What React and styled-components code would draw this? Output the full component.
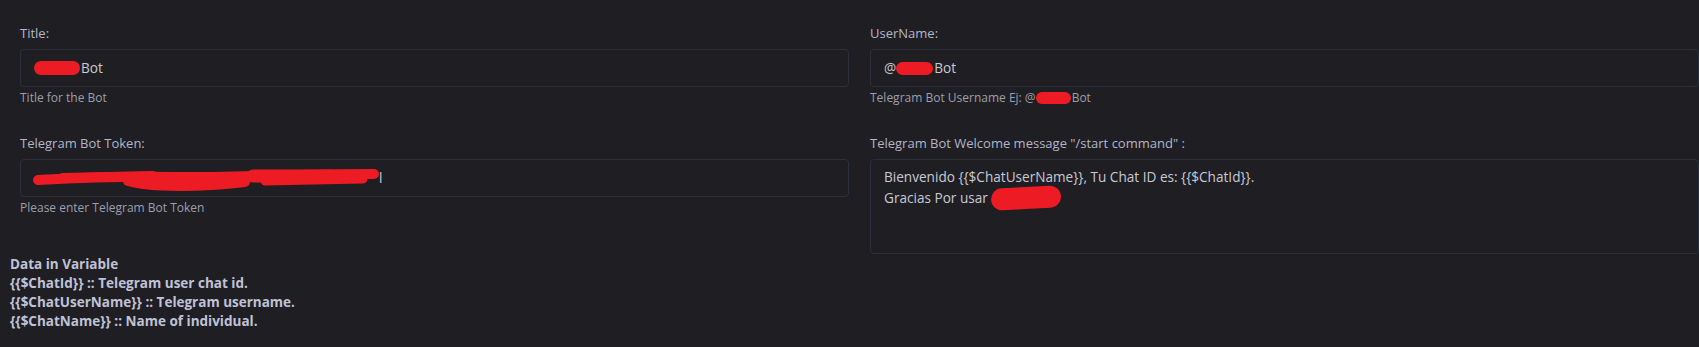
import React from "react";
import styled, { createGlobalStyle } from "styled-components";

const GlobalStyle = createGlobalStyle`
  body {
    margin: 0;
    background: #1e1e23;
    font-family: "Open Sans", "Liberation Sans", sans-serif;
  }
`;

const Page = styled.div`
  width: 1699px;
  height: 347px;
  background: #1e1e23;
  overflow: hidden;
  padding-top: 23px;
  box-sizing: border-box;
`;

const FormGrid = styled.div`
  display: grid;
  grid-template-columns: 829px 829px;
  column-gap: 21px;
  padding-left: 20px;
`;

const Column = styled.div`
  display: flex;
  flex-direction: column;
  gap: 26px;
`;

const Group = styled.div`
  display: flex;
  flex-direction: column;
`;

const Label = styled.label`
  color: #b4b6c8;
  font-size: 13px;
  line-height: 20px;
  margin-bottom: 6px;
`;

const Field = styled.div`
  box-sizing: border-box;
  height: ${(props) => props.height || 38}px;
  border: 1px solid #2b2f3e;
  border-radius: 4px;
  padding: ${(props) => (props.multiline ? "7px 13px" : "0 13px")};
  display: flex;
  align-items: ${(props) => (props.multiline ? "flex-start" : "center")};
  color: #c9cad3;
  font-size: 13.6px;
  line-height: 20px;
  white-space: pre-wrap;
`;

const FieldText = styled.div`
  display: flex;
  flex-direction: column;
`;

const Line = styled.span`
  display: flex;
  align-items: center;
  white-space: pre;
`;

const Help = styled.small`
  color: #9d9fae;
  font-size: 12px;
  line-height: 18px;
  margin-top: 2px;
`;

const Redact = styled.span`
  display: inline-block;
  width: ${(props) => props.w}px;
  height: ${(props) => props.h}px;
  background: #ed1c24;
  border-radius: ${(props) => props.h / 2}px;
  transform: ${(props) => (props.tilt ? `rotate(${props.tilt}deg)` : "none")};
  margin-right: ${(props) => props.gap || 1}px;
`;

const Scribble = styled.svg`
  display: block;
  margin-left: -1px;
`;

const VarList = styled.div`
  margin-top: 1px;
  padding-left: 10px;
  color: #c0c2d6;
  font-size: 13.5px;
  font-weight: 700;
  line-height: 19px;
`;

const TokenScribble = () => (
  <Line>
    <Scribble width="346" height="26" viewBox="0 0 346 26">
      <g stroke="#ed1c24" strokeLinecap="round" fill="none">
        <path d="M5 15 C60 12 100 11 140 12 S260 9 341 9" strokeWidth="10" />
        <path d="M95 16 C120 23 170 22 212 17" strokeWidth="10" />
        <path d="M220 11 L298 11" strokeWidth="13" />
        <path d="M232 16 L330 14" strokeWidth="9" />
        <path d="M30 12 L120 10" strokeWidth="8" />
      </g>
    </Scribble>
    <span>l</span>
  </Line>
);

const App = () => {
  return (
    <Page>
      <GlobalStyle />
      <FormGrid>
        <Column>
          <Group>
            <Label>Title:</Label>
            <Field>
              <Line>
                <Redact w={46} h={14} />
                Bot
              </Line>
            </Field>
            <Help>Title for the Bot</Help>
          </Group>
          <Group>
            <Label>Telegram Bot Token:</Label>
            <Field>
              <TokenScribble />
            </Field>
            <Help>Please enter Telegram Bot Token</Help>
          </Group>
        </Column>
        <Column>
          <Group>
            <Label>UserName:</Label>
            <Field>
              <Line>
                @<Redact w={37} h={13} />
                Bot
              </Line>
            </Field>
            <Help>
              <Line>
                Telegram Bot Username Ej: @<Redact w={35} h={12} />
                Bot
              </Line>
            </Help>
          </Group>
          <Group>
            <Label>Telegram Bot Welcome message "/start command" :</Label>
            <Field multiline height={95}>
              <FieldText>
                <span>
                  Bienvenido {"{{$ChatUserName}}"}, Tu Chat ID es: {"{{$ChatId}}"}.
                </span>
                <Line>
                  Gracias Por usar <Redact w={70} h={22} tilt={-3} />
                </Line>
              </FieldText>
            </Field>
          </Group>
        </Column>
      </FormGrid>
      <VarList>
        <div>Data in Variable</div>
        <div>{"{{$ChatId}}"} :: Telegram user chat id.</div>
        <div>{"{{$ChatUserName}}"} :: Telegram username.</div>
        <div>{"{{$ChatName}}"} :: Name of individual.</div>
      </VarList>
    </Page>
  );
};

export default App;
